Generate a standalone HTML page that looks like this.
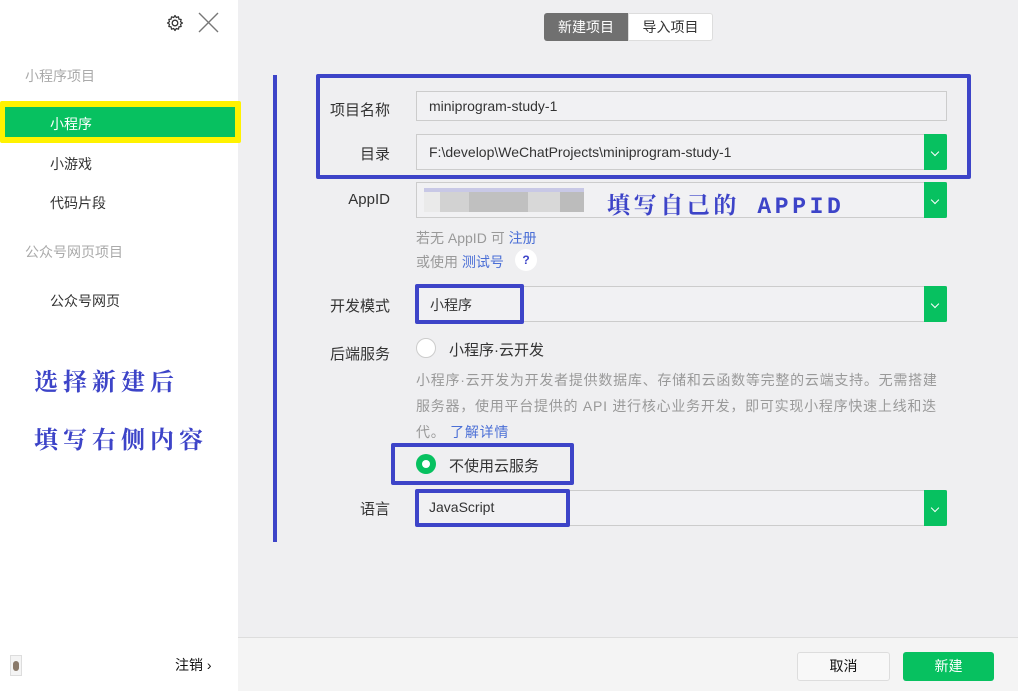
<!DOCTYPE html>
<html><head><meta charset="utf-8"><style>
*{margin:0;padding:0;box-sizing:border-box}
body{width:1018px;height:691px;position:relative;overflow:hidden;background:#efeff1;font-family:"Liberation Sans","Noto Sans CJK SC",sans-serif;font-size:14px;color:#333}
.a{position:absolute}
.side{left:0;top:0;width:238px;height:691px;background:#fff}
.grey{color:#aaa;font-size:14px}
.item{color:#333;font-size:14px}
.box{position:absolute;border:1px solid #ccc;background:#f1f1f3;height:30px}
.sel{position:absolute;border:1px solid #ccc;background:#f1f1f3;height:36px}
.chev{position:absolute;right:-1px;top:-1px;width:23px;bottom:-1px;background:#07c160;border-radius:0 2px 2px 0}
.chev:after{content:"";position:absolute;left:8px;top:42%;width:5px;height:5px;border-right:1.5px solid #fff;border-bottom:1.5px solid #fff;transform:rotate(45deg)}
.lbl{position:absolute;font-size:15px;color:#333;text-align:right;width:80px}
.blue{position:absolute;border:4px solid #3d44c8;border-radius:2px}
.ann{position:absolute;font-family:"Noto Serif CJK SC",serif;font-weight:bold;color:#3d44c8;font-size:24px;letter-spacing:5px}
.link{color:#4b6fd6}
</style></head><body>
<div class="a side">
  <svg class="a" style="left:166px;top:14px" width="18" height="18" viewBox="0 0 18 18"><circle cx="9" cy="9" r="2.8" fill="none" stroke="#333" stroke-width="1.3"/><path d="M9 1.5l1.3 2 2.2-.7.4 2.3 2.3.4-.7 2.2 2 1.3-2 1.3.7 2.2-2.3.4-.4 2.3-2.2-.7L9 16.5l-1.3-2-2.2.7-.4-2.3-2.3-.4.7-2.2-2-1.3 2-1.3-.7-2.2 2.3-.4.4-2.3 2.2.7z" fill="none" stroke="#333" stroke-width="1.2" stroke-linejoin="round"/></svg>
  <svg class="a" style="left:198px;top:12px" width="21" height="21" viewBox="0 0 21 21"><path d="M1 1L20 20M20 1L1 20" stroke="#777" stroke-width="1.4"/></svg>
  <div class="a grey" style="left:25px;top:66px">小程序项目</div>
  <div class="a" style="left:0;top:101px;width:241px;height:42px;background:#fff200;border-radius:2px"></div>
  <div class="a" style="left:5px;top:107px;width:230px;height:30px;background:#07c160"></div>
  <div class="a" style="left:50px;top:114px;color:#fff">小程序</div>
  <div class="a item" style="left:50px;top:154px">小游戏</div>
  <div class="a item" style="left:50px;top:193px">代码片段</div>
  <div class="a grey" style="left:25px;top:242px">公众号网页项目</div>
  <div class="a item" style="left:50px;top:291px">公众号网页</div>
  <div class="ann" style="left:34px;top:362px">选择新建后</div>
  <div class="ann" style="left:34px;top:420px">填写右侧内容</div>
  <div class="a" style="left:10px;top:655px;width:12px;height:21px;border:1px solid #ddd;background:#f4f4f4"><div style="margin:5px 2px;width:6px;height:10px;background:#8a7a6a;border-radius:3px"></div></div>
  <div class="a" style="left:175px;top:655px;color:#111">注销 ›</div>
</div>
<div class="a" style="left:544px;top:13px;width:84px;height:28px;background:#707070;border-radius:3px 0 0 3px;color:#fff;text-align:center;line-height:28px">新建项目</div>
<div class="a" style="left:628px;top:13px;width:85px;height:28px;background:#fff;border:1px solid #ddd;border-radius:0 3px 3px 0;text-align:center;line-height:26px">导入项目</div>

<div class="a" style="left:273px;top:75px;width:4px;height:467px;background:#3d44c8"></div>

<div class="blue" style="left:316px;top:74px;width:655px;height:105px"></div>
<div class="lbl" style="left:310px;top:99px">项目名称</div>
<div class="box" style="left:416px;top:91px;width:531px"><span class="a" style="left:12px;top:6px">miniprogram-study-1</span></div>
<div class="lbl" style="left:310px;top:143px">目录</div>
<div class="sel" style="left:416px;top:134px;width:531px"><span class="a" style="left:12px;top:9px">F:\develop\WeChatProjects\miniprogram-study-1</span><div class="chev"></div></div>

<div class="lbl" style="left:310px;top:191px">AppID</div>
<div class="sel" style="left:416px;top:182px;width:531px;background:#f1f1f3"><div class="chev"></div>
<div class="a" style="left:7px;top:5px;width:160px;height:4px;background:#c8c8e6"></div>
<div class="a" style="left:7px;top:9px;width:160px;height:20px;background:linear-gradient(90deg,#eaeaea 0 10%,#d2d2d2 10% 28%,#c0c0c0 28% 65%,#d8d8d8 65% 85%,#bcbcbc 85%)"></div>
<div class="ann" style="left:190px;top:4px;font-size:23px;letter-spacing:3.6px;font-family:'Liberation Mono','Noto Serif CJK SC',serif">填写自己的 APPID</div></div>
<div class="a" style="left:416px;top:228px;color:#999">若无 AppID 可 <span class="link">注册</span></div>
<div class="a" style="left:416px;top:252px;color:#999">或使用 <span class="link">测试号</span></div>
<div class="a" style="left:515px;top:249px;width:22px;height:22px;border-radius:50%;background:#fff;color:#3d44c8;font-size:12px;font-weight:bold;text-align:center;line-height:22px">?</div>

<div class="lbl" style="left:310px;top:295px">开发模式</div>
<div class="sel" style="left:416px;top:286px;width:531px"><div class="chev"></div></div>
<div class="blue" style="left:415px;top:284px;width:109px;height:40px"></div>
<div class="a" style="left:430px;top:295px">小程序</div>

<div class="lbl" style="left:310px;top:343px">后端服务</div>
<div class="a" style="left:416px;top:338px;width:20px;height:20px;border-radius:50%;background:#fff;border:1px solid #ccc"></div>
<div class="a" style="left:449px;top:339px;font-size:15px">小程序·云开发</div>
<div class="a" style="left:416px;top:367px;color:#999;line-height:26px;white-space:nowrap;letter-spacing:0.75px">小程序·云开发为开发者提供数据库、存储和云函数等完整的云端支持。无需搭建<br>服务器，使用平台提供的 API 进行核心业务开发，即可实现小程序快速上线和迭<br>代。 <span class="link">了解详情</span></div>

<div class="blue" style="left:391px;top:443px;width:183px;height:42px"></div>
<div class="a" style="left:416px;top:454px;width:20px;height:20px;border-radius:50%;background:#07c160"><div style="margin:6px;width:8px;height:8px;border-radius:50%;background:#fff"></div></div>
<div class="a" style="left:449px;top:455px;font-size:15px">不使用云服务</div>

<div class="lbl" style="left:310px;top:498px">语言</div>
<div class="sel" style="left:416px;top:490px;width:531px"><div class="chev"></div></div>
<div class="blue" style="left:415px;top:489px;width:155px;height:38px"></div>
<div class="a" style="left:429px;top:499px">JavaScript</div>

<div class="a" style="left:238px;top:637px;width:780px;height:54px;background:#f4f4f4;border-top:1px solid #ddd"></div>
<div class="a" style="left:797px;top:652px;width:93px;height:29px;background:#f8f8f8;border:1px solid #ddd;border-radius:3px;text-align:center;line-height:27px;color:#111">取消</div>
<div class="a" style="left:903px;top:652px;width:91px;height:29px;background:#07c160;border-radius:3px;text-align:center;line-height:29px;color:#fff">新建</div>
</body></html>
